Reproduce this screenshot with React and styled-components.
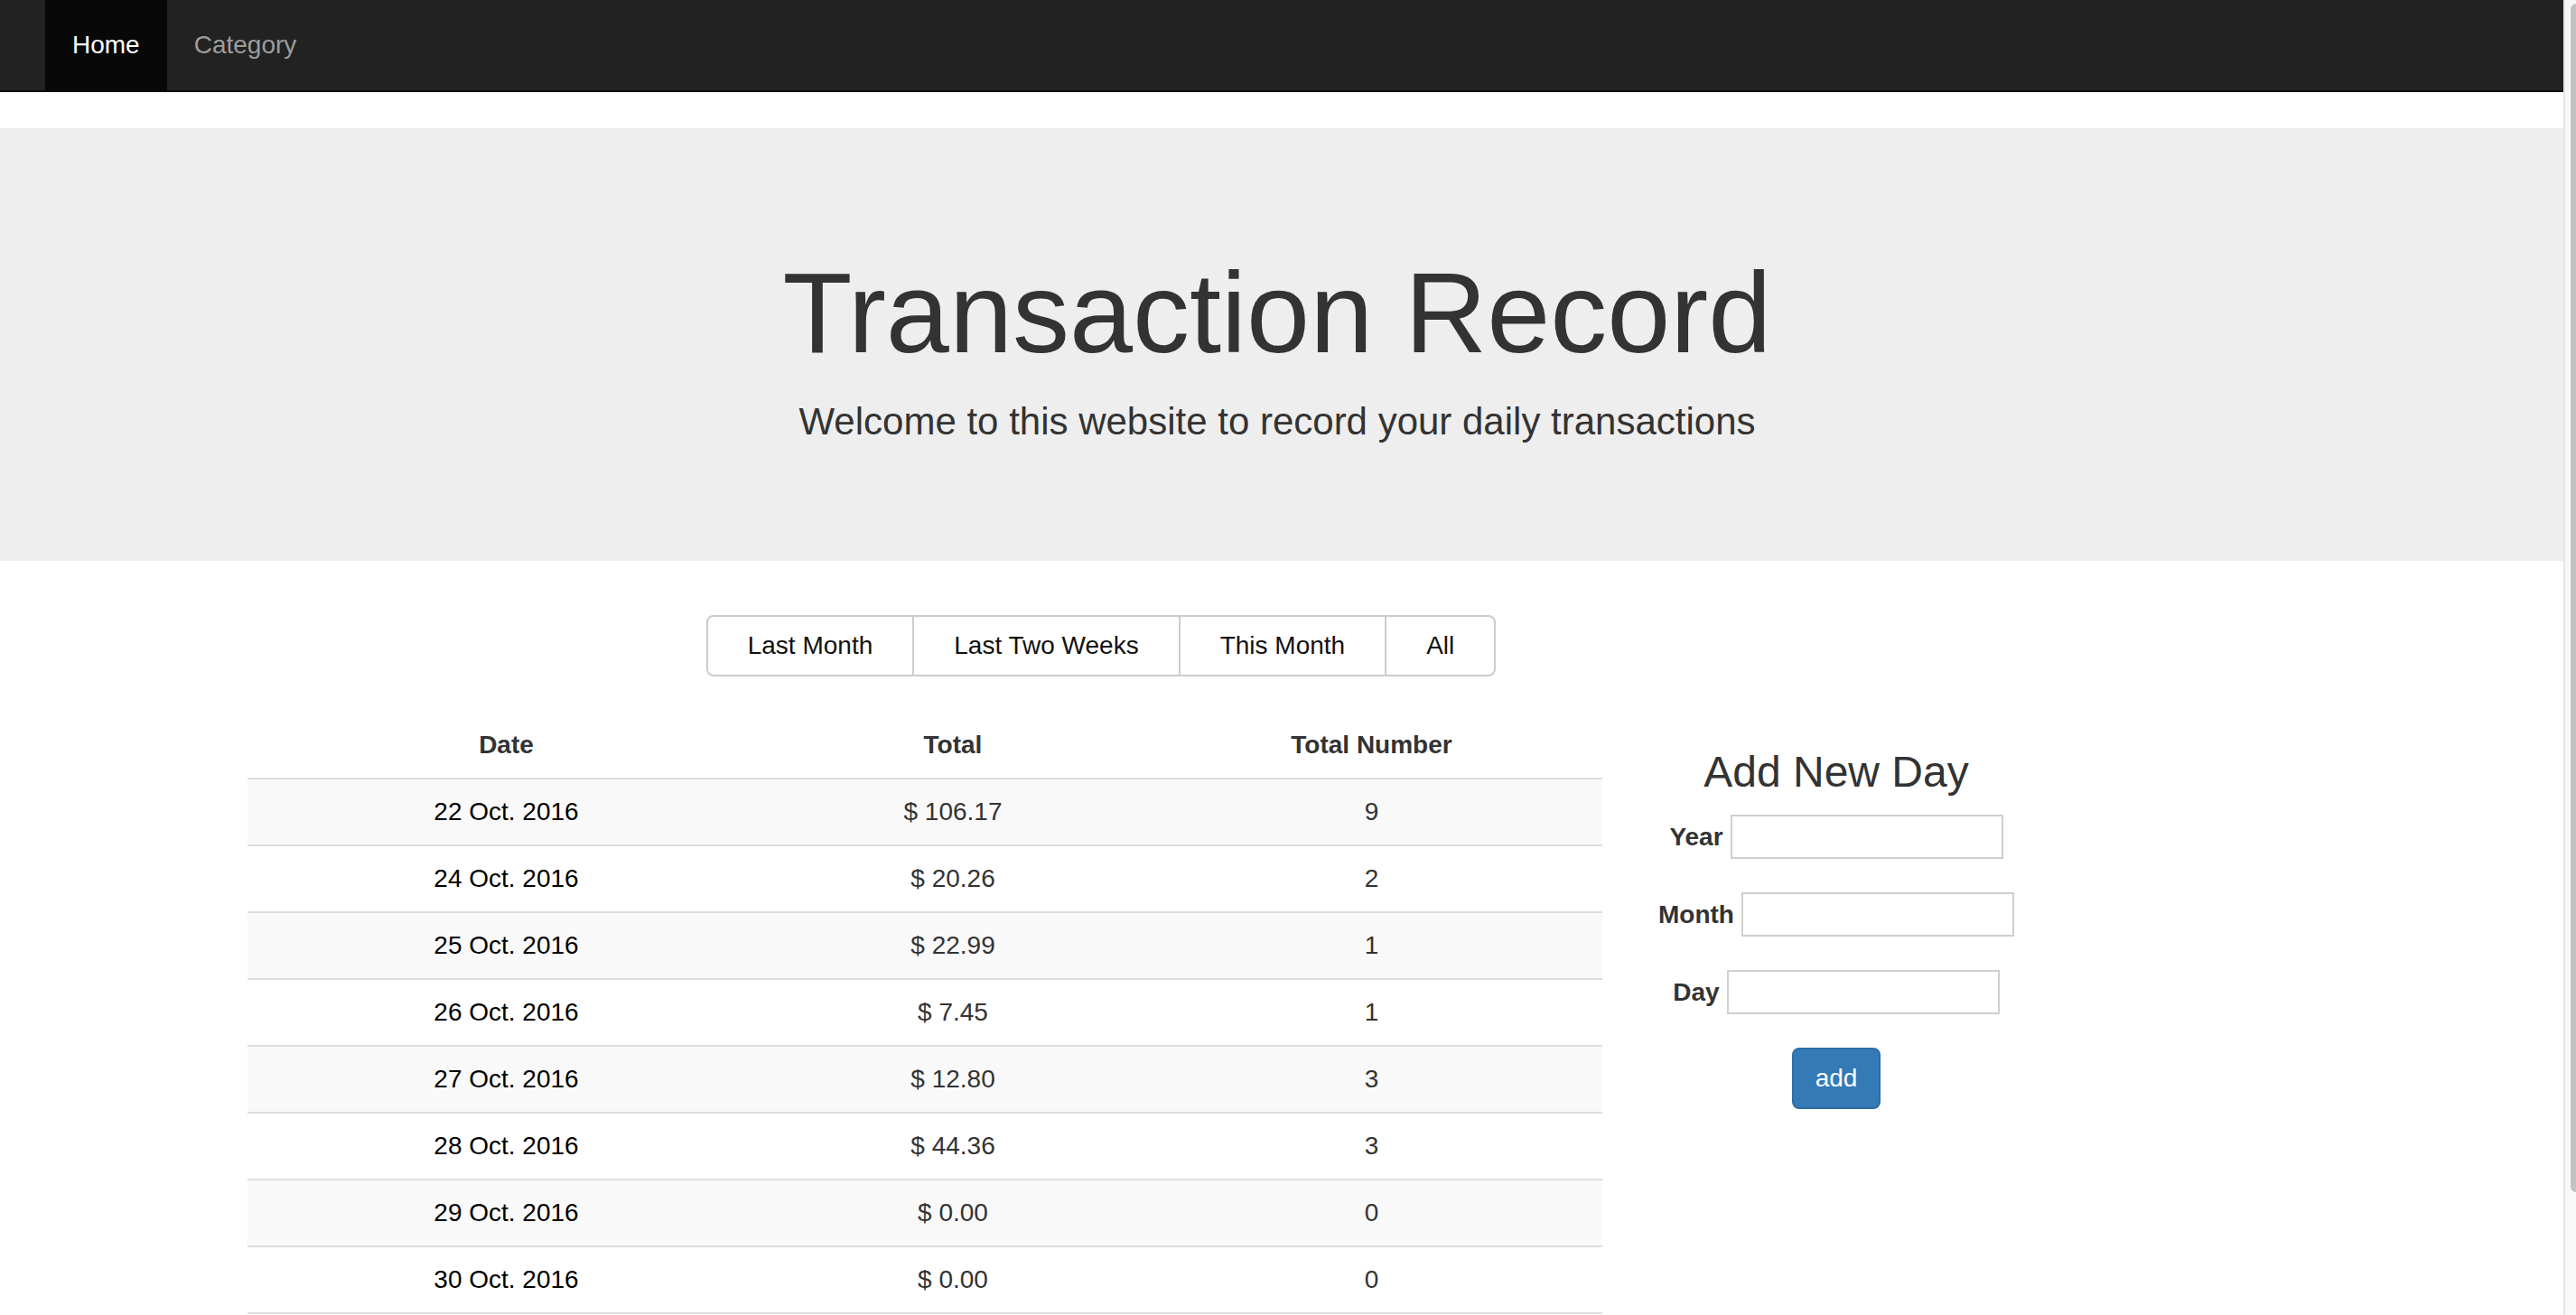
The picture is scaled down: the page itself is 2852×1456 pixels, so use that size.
import styled, { createGlobalStyle } from "styled-components";

const GlobalStyle = createGlobalStyle`
  html, body {
    margin: 0;
    padding: 0;
    overflow: hidden;
    background: #fff;
  }
  body {
    font-family: "Liberation Sans", Arial, Helvetica, sans-serif;
    font-size: 28px;
    line-height: 40px;
    color: #333;
  }
  * {
    box-sizing: border-box;
  }
`;

const Frame = styled.div`
  display: flex;
  width: 100%;
  height: 1456px;
`;
const Page = styled.div`
  flex: 1;
  min-width: 0;
  overflow: hidden;
`;
const ScrollTrack = styled.div`
  width: 14px;
  flex-shrink: 0;
  background: #f8f8f8;
  border-left: 2px solid #e6e6e6;
  padding: 4px 0 0 6px;
`;
const ScrollThumb = styled.div`
  height: 1316px;
  background: #c2c2c2;
  border-radius: 6px 0 0 6px;
`;

const Navbar = styled.nav`
  height: 102px;
  background: #222;
  border-bottom: 2px solid #080808;
  margin-bottom: 40px;
  padding-left: 50px;
  display: flex;
`;
const NavItem = styled.a`
  display: block;
  padding: 30px;
  line-height: 40px;
  font-size: 28px;
  text-decoration: none;
  color: ${(p) => (p.$active ? "#fff" : "#9d9d9d")};
  background: ${(p) => (p.$active ? "#080808" : "transparent")};
`;

const Jumbotron = styled.header`
  background: #eee;
  padding: 96px 0 94px;
  margin-bottom: 60px;
`;
const Container = styled.div`
  width: 2340px;
  margin-left: 244px;
`;
const Title = styled.h1`
  margin: 40px 0 20px;
  font-size: 126px;
  line-height: 1.1;
  font-weight: 500;
  text-align: center;
  color: #333;
`;
const Lead = styled.p`
  margin: 0 0 30px;
  font-size: 42px;
  line-height: 60px;
  font-weight: 200;
  text-align: center;
`;

const FilterRow = styled.div`
  width: 1950px;
  padding: 0 30px;
  text-align: center;
  margin-bottom: 40px;
`;
const FilterGroup = styled.div`
  display: inline-flex;
`;
const FilterButton = styled.button`
  font-family: inherit;
  font-size: 28px;
  line-height: 40px;
  padding: 12px 44px;
  color: #111;
  background: #fff;
  border: 2px solid #ccc;
  border-radius: 0;
  margin-left: -2px;
  cursor: pointer;
  &:first-child {
    margin-left: 0;
    border-radius: 8px 0 0 8px;
  }
  &:last-child {
    border-radius: 0 8px 8px 0;
  }
`;

const ContentRow = styled.div`
  display: flex;
  align-items: flex-start;
`;
const TableCol = styled.div`
  width: 1560px;
  padding: 0 30px;
`;
const Table = styled.table`
  width: 1500px;
  table-layout: fixed;
  border-collapse: collapse;
  border-spacing: 0;
  border-bottom: 2px solid #ddd;
`;
const Th = styled.th`
  padding: 16px;
  line-height: 40px;
  font-weight: bold;
  color: #333;
  text-align: center;
  border-bottom: 2px solid #ddd;
`;
const Tr = styled.tr`
  background: ${(p) => (p.$striped ? "#f9f9f9" : "transparent")};
`;
const Td = styled.td`
  padding: 16px;
  line-height: 40px;
  text-align: center;
  border-top: 2px solid #ddd;
  color: ${(p) => (p.$strong ? "#000" : "#333")};
`;

const FormCol = styled.div`
  width: 458px;
  text-align: center;
`;
const FormTitle = styled.h3`
  margin: 40px 0 21px;
  font-size: 48px;
  line-height: 1.1;
  font-weight: 500;
  color: #333;
`;
const FieldRow = styled.div`
  display: flex;
  justify-content: center;
  align-items: center;
  gap: 8px;
  height: 49px;
  margin-bottom: 37px;
  & label {
    font-weight: bold;
    color: #333;
  }
`;
const Input = styled.input`
  width: 302px;
  height: 49px;
  border: 2px solid #cfcfcf;
  border-radius: 0;
  padding: 0 6px;
  font-family: inherit;
  font-size: 26px;
  background: #fff;
`;
const AddButton = styled.button`
  font-family: inherit;
  font-size: 28px;
  line-height: 40px;
  padding: 12px 24px;
  color: #fff;
  background: #337ab7;
  border: 2px solid #2e6da4;
  border-radius: 8px;
  cursor: pointer;
`;

const filters = ["Last Month", "Last Two Weeks", "This Month", "All"];

const days = [
  { date: "22 Oct. 2016", total: "$ 106.17", count: 9 },
  { date: "24 Oct. 2016", total: "$ 20.26", count: 2 },
  { date: "25 Oct. 2016", total: "$ 22.99", count: 1 },
  { date: "26 Oct. 2016", total: "$ 7.45", count: 1 },
  { date: "27 Oct. 2016", total: "$ 12.80", count: 3 },
  { date: "28 Oct. 2016", total: "$ 44.36", count: 3 },
  { date: "29 Oct. 2016", total: "$ 0.00", count: 0 },
  { date: "30 Oct. 2016", total: "$ 0.00", count: 0 },
];

const fields = [
  { id: "year", label: "Year" },
  { id: "month", label: "Month" },
  { id: "day", label: "Day" },
];

function App() {
  return (
    <Frame>
      <GlobalStyle />
      <Page>
        <Navbar>
          <NavItem href="#" $active>
            Home
          </NavItem>
          <NavItem href="#">Category</NavItem>
        </Navbar>

        <Jumbotron>
          <Container>
            <Title>Transaction Record</Title>
            <Lead>Welcome to this website to record your daily transactions</Lead>
          </Container>
        </Jumbotron>

        <Container>
          <FilterRow>
            <FilterGroup>
              {filters.map((f) => (
                <FilterButton key={f}>{f}</FilterButton>
              ))}
            </FilterGroup>
          </FilterRow>

          <ContentRow>
            <TableCol>
              <Table>
                <colgroup>
                  <col style={{ width: 573 }} />
                  <col style={{ width: 416 }} />
                  <col style={{ width: 511 }} />
                </colgroup>
                <thead>
                  <tr>
                    <Th>Date</Th>
                    <Th>Total</Th>
                    <Th>Total Number</Th>
                  </tr>
                </thead>
                <tbody>
                  {days.map((d, i) => (
                    <Tr key={d.date} $striped={i % 2 === 0}>
                      <Td $strong>{d.date}</Td>
                      <Td>{d.total}</Td>
                      <Td>{d.count}</Td>
                    </Tr>
                  ))}
                </tbody>
              </Table>
            </TableCol>

            <FormCol>
              <FormTitle>Add New Day</FormTitle>
              {fields.map((f) => (
                <FieldRow key={f.id}>
                  <label htmlFor={f.id}>{f.label}</label>
                  <Input type="text" id={f.id} />
                </FieldRow>
              ))}
              <AddButton>add</AddButton>
            </FormCol>
          </ContentRow>
        </Container>
      </Page>
      <ScrollTrack>
        <ScrollThumb />
      </ScrollTrack>
    </Frame>
  );
}

export default App;
